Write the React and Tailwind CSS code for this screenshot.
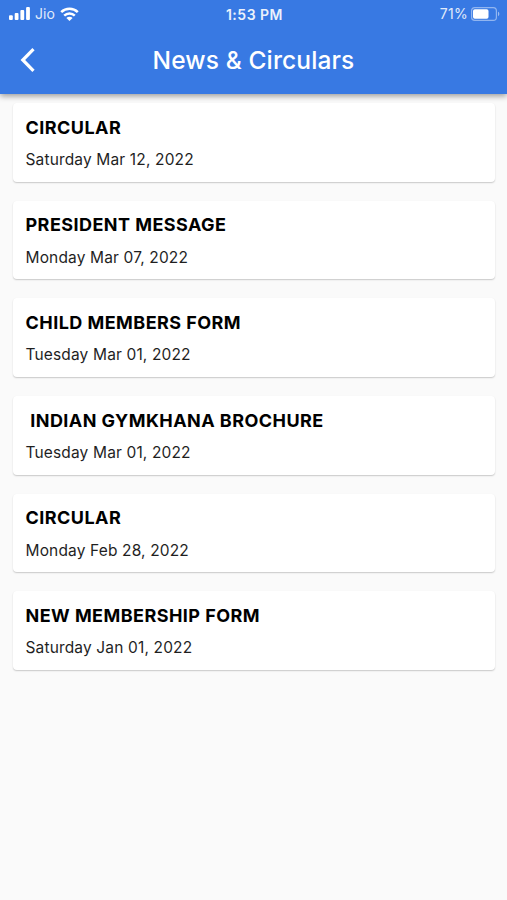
import React from 'react';

const circulars = [
    { title: 'CIRCULAR', date: 'Saturday Mar 12, 2022' },
    { title: 'PRESIDENT MESSAGE', date: 'Monday Mar 07, 2022' },
    { title: 'CHILD MEMBERS FORM', date: 'Tuesday Mar 01, 2022' },
    { title: ' INDIAN GYMKHANA BROCHURE', date: 'Tuesday Mar 01, 2022' },
    { title: 'CIRCULAR', date: 'Monday Feb 28, 2022' },
    { title: 'NEW MEMBERSHIP FORM', date: 'Saturday Jan 01, 2022' },
];

const SignalIcon = () => (
    <svg width="21" height="13" viewBox="0 0 21 13" fill="currentColor">
        <rect x="0" y="8.2" width="3.8" height="4.8" rx="1" />
        <rect x="5.7" y="6" width="3.8" height="7" rx="1" />
        <rect x="11.4" y="3" width="3.8" height="10" rx="1" />
        <rect x="17.1" y="0" width="3.8" height="13" rx="1" />
    </svg>
);

const WifiIcon = () => (
    <svg width="19" height="14" viewBox="0 0 19 14" fill="none" stroke="currentColor" strokeWidth="2.5">
        <path d="M1.2 5.1a11.8 11.8 0 0 1 16.6 0" />
        <path d="M4.2 8.6a7.6 7.6 0 0 1 10.6 0" />
        <path d="M6.4 11a4.4 4.4 0 0 1 6.2 0L9.5 14z" fill="currentColor" stroke="none" />
    </svg>
);

const BatteryIcon = () => (
    <svg width="29" height="14" viewBox="0 0 29 14" fill="none">
        <rect x="0.6" y="0.6" width="24.8" height="12.8" rx="3.2" stroke="currentColor" strokeOpacity="0.45" strokeWidth="1.2" />
        <rect x="2" y="2.2" width="15.5" height="9.6" rx="1.8" fill="currentColor" />
        <path d="M27 4.8v4.4c1.8-.6 1.8-3.8 0-4.4z" fill="currentColor" fillOpacity="0.5" />
    </svg>
);

const StatusBar = () => (
    <div className="grid h-[27px] grid-cols-3 items-center pl-[9px] pr-[7px] text-[14px] leading-none">
        <div className="flex items-center">
            <SignalIcon />
            <span className="ml-[5px] mr-[5px] opacity-85">Jio</span>
            <WifiIcon />
        </div>
        <span className="pt-0.5 text-center text-[14px] font-semibold tracking-[0.5px] opacity-90">1:53 PM</span>
        <div className="flex items-center justify-end gap-[3px]">
            <span className="tracking-[0.3px] opacity-85">71%</span>
            <BatteryIcon />
        </div>
    </div>
);

const CircularCard = ({ title, date }) => (
    <div className="h-[78.7px] rounded bg-white px-[12.5px] pt-[13.5px] text-black shadow-[0_1px_1.5px_rgba(0,0,0,0.2)]">
        <h2 className="whitespace-pre text-[18px] font-[650] leading-[22px] tracking-[0.45px]">{title}</h2>
        <p className="mt-[11.5px] text-[15.5px] leading-5 tracking-[0.15px] text-[#1f1f1f]">{date}</p>
    </div>
);

export default function App() {
    return (
        <div className="min-h-screen bg-[#fafafa] font-[Inter,sans-serif]">
            <header className="relative h-[94px] bg-[#3879e3] text-white shadow-[0_2px_6px_rgba(0,0,0,0.4)]">
                <StatusBar />
                <div className="grid h-[65px] grid-cols-[56px_1fr_56px] items-center">
                    <button aria-label="Back" className="pl-5">
                        <svg width="15" height="24" viewBox="0 0 15 24" fill="none" stroke="currentColor" strokeWidth="3.2">
                            <path d="M13.5 1.2 2.8 12l10.7 10.8" />
                        </svg>
                    </button>
                    <h1 className="pt-px text-center text-[24.5px] font-[450] tracking-[0.12px]">News &amp; Circulars</h1>
                </div>
            </header>
            <main className="flex flex-col gap-[19px] pl-[13px] pr-3 pt-[9px]">
                {circulars.map((item, index) => (
                    <CircularCard key={index} title={item.title} date={item.date} />
                ))}
            </main>
        </div>
    );
}
